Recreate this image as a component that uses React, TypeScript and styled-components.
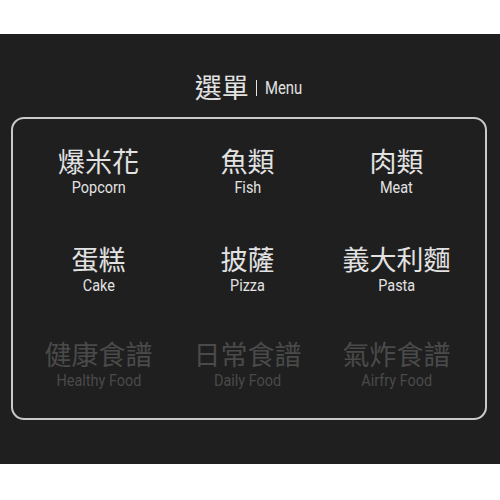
import React from "react";
import styled, { createGlobalStyle } from "styled-components";

const Global = createGlobalStyle`
  html, body { margin: 0; padding: 0; background: #ffffff; }
  body { font-family: "Noto Sans CJK TC", "Noto Sans", sans-serif; }
`;

const Screen = styled.div`
  margin-top: 34px;
  height: 430px;
  background: #1f1f1f;
  display: flex;
  flex-direction: column;
  padding: 0 13px 0 11px;
  box-sizing: border-box;
`;

const Title = styled.div`
  display: flex;
  align-items: center;
  justify-content: center;
  height: 83px;
  box-sizing: border-box;
  padding: 22px 0 0 0;
  gap: 7px;
`;

const TitleCJK = styled.span`
  font-family: "Noto Sans CJK TC", sans-serif;
  font-size: 27px;
  line-height: 30px;
  color: #e2e2e2;
`;

const Divider = styled.span`
  width: 1.5px;
  height: 16px;
  background: #e2e2e2;
  margin-top: 2px;
`;

const TitleEn = styled.span`
  font-family: Roboto, "Noto Sans", sans-serif;
  font-size: 17.5px;
  line-height: 20px;
  color: #e2e2e2;
  display: inline-block;
  transform: scaleX(0.85);
  transform-origin: left center;
  margin: 2px -6px 0 1px;
`;

const Box = styled.div`
  border: 2px solid #c9c9c9;
  border-radius: 13px;
  height: 303px;
  box-sizing: border-box;
  display: grid;
  grid-template-columns: repeat(3, 149px);
  grid-template-rows: 98px 95px 1fr;
  justify-content: center;
  padding: 27px 3px 0 0;
`;

const Item = styled.div`
  display: flex;
  flex-direction: column;
  align-items: center;
`;

const CJK = styled.div<{ $dim?: boolean }>`
  font-family: "Noto Sans CJK TC", sans-serif;
  font-size: 27px;
  line-height: 30px;
  color: ${(p) => (p.$dim ? "#4a4a4a" : "#e2e2e2")};
  white-space: nowrap;
`;

const En = styled.div<{ $dim?: boolean }>`
  font-family: Roboto, "Noto Sans", sans-serif;
  font-size: 17px;
  line-height: 19px;
  margin-top: 2px;
  color: ${(p) => (p.$dim ? "#4a4a4a" : "#e2e2e2")};
  transform: scaleX(0.85);
  white-space: nowrap;
`;

const items = [
  { zh: "爆米花", en: "Popcorn" },
  { zh: "魚類", en: "Fish" },
  { zh: "肉類", en: "Meat" },
  { zh: "蛋糕", en: "Cake" },
  { zh: "披薩", en: "Pizza" },
  { zh: "義大利麵", en: "Pasta" },
  { zh: "健康食譜", en: "Healthy Food", dim: true },
  { zh: "日常食譜", en: "Daily Food", dim: true },
  { zh: "氣炸食譜", en: "Airfry Food", dim: true },
];

export default function App() {
  return (
    <>
      <Global />
      <Screen>
        <Title>
          <TitleCJK>選單</TitleCJK>
          <Divider />
          <TitleEn>Menu</TitleEn>
        </Title>
        <Box>
          {items.map((it) => (
            <Item key={it.en}>
              <CJK $dim={it.dim}>{it.zh}</CJK>
              <En $dim={it.dim}>{it.en}</En>
            </Item>
          ))}
        </Box>
      </Screen>
    </>
  );
}
